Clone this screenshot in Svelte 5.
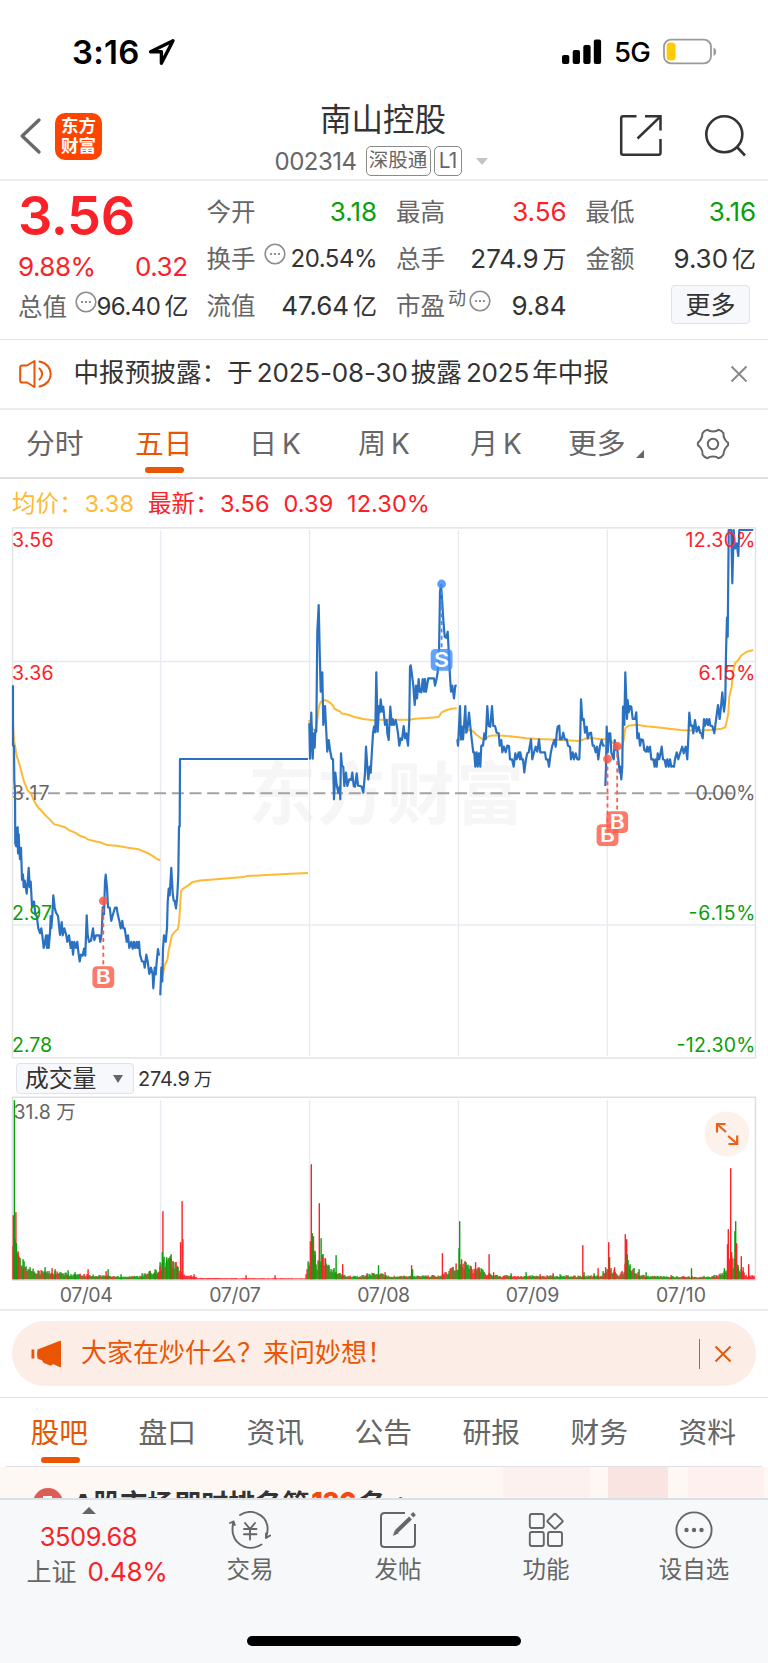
<script>
  const RED = '#fa2228';
  const GREEN = '#0a9f0a';

  // Each trace is digitised on its own grid: origin (x0, y0) and kx / ky units per pixel.
  const trace = (x0, y0, kx, ky, raw) =>
    raw.trim().split(/\s+/).map((p) => {
      const [x, y] = p.split(',').map(Number);
      return `${(x0 + x / kx).toFixed(1)},${(y0 + y / ky).toFixed(1)}`;
    }).join(' ');
  const a = (s) => trace(0, 520, 3, 2.904, s);
  const b = (s) => trace(300, 520, 3, 3, s);
  const c = (s) => trace(520, 520, 3, 3, s);

  const prices = [
    a(`39,480 39,655 42,655 43,755 45,790 46,940 49,948 50,895 53,892 54,968 56,912 58,960 60,985 63,952 66,1045 69,1030 71,1066 74,1047 77,1066 80,1085 83,1050 86,1010 89,1066 92,1050 96,1122 102,1108 106,1145 110,1150 115,1185 120,1200 124,1186 127,1206 131,1243 135,1225 138,1206 141,1243 144,1206 146,1243 150,1200 152,1150 154,1185 157,1150 160,1090 164,1126 168,1140 174,1150 180,1205 185,1168 188,1206 193,1186 199,1206 202,1225 207,1206 212,1243 216,1225 219,1262 223,1225 228,1243 232,1225 236,1262 239,1282 243,1262 248,1265 252,1245 256,1265 260,1148 263,1206 267,1225 273,1222 279,1186 283,1220 288,1206 298,1206 301,1225 305,1200 308,1125 312,1145 315,1050 317,1030 321,1068 324,1125 329,1126 334,1164 339,1145 345,1126 350,1126 353,1145 358,1164 362,1186 367,1164 370,1186 374,1186 380,1225 384,1206 388,1243 394,1225 398,1245 402,1225 406,1243 410,1225 413,1243 417,1225 420,1262 426,1282 431,1282 434,1300 439,1262 443,1282 448,1318 453,1300 458,1320 460,1360 464,1300 467,1320 470,1282 474,1246 477,1265`),
    a(`481,1380 484,1300 487,1340 489,1245 492,1206 497,1225 501,1185 503,1110 506,1070 509,1090 514,1010 518,1085 521,1105 524,1106 528,1128 532,1090 535,1030 537,890 539,890 540,694 924,694`),
    b(`28,610 30,716 34,578 38,716 41,640 44,683 46,630 49,635 52,335 56,255 59,395 62,515 67,457 70,615 75,558 79,635 82,695 86,660 90,690 95,716 99,718 102,838 106,758 110,795 115,818 119,800 121,838 123,700 126,738 130,740 133,798 138,758 142,798 148,778 154,780 157,758 161,798 165,800 170,760 174,797 180,798 185,800 190,818 195,760 198,680 202,740 205,778 209,740 212,758 216,690 219,640 222,620 226,637 229,457 233,635 237,558 239,577 242,538 246,575 250,560 255,615 260,600 262,640 266,660 271,560 275,615 278,597 282,615 287,600 290,615 294,640 298,677 302,655 306,660 311,618 315,655 319,640 324,677 328,600 330,440 332,436 335,457 340,497 344,555 348,497 351,535 356,477 359,515 364,517 368,477 372,515 375,477 378,515 385,475 402,475 405,497 410,475 413,457 417,400 420,215 423,195 426,235 430,300 434,350 439,353 443,335 447,410 450,470 453,515 457,497 462,535 466,497 470,496`),
    b(`472,658 474,677 477,620 480,558 483,658 486,620 489,658 492,620 496,558 499,638 503,620 507,578 511,618 515,658 520,697 523,697 526,740 530,697 533,740 537,700 541,740 544,677 549,677 553,640 557,658 562,558 566,618 571,620 576,558 580,618 585,618 590,638 596,640 599,677 604,660 607,697 612,680 617,697 622,677 627,678 630,718 636,718 641,740 646,700 650,718 656,697 660,718`) + ' ' +
    c(`1,697 5,718 9,718 13,757 18,718 22,700 26,697 33,658 37,718 42,697 47,680 52,695 57,658 61,697 75,697 78,718 83,718 87,740 92,700 97,677 103,660 107,680 110,640 113,620 118,617 120,658 125,658 130,638 134,658 140,658 144,677 150,680 153,718 158,697 162,718 167,700 172,718 178,718 181,640 183,538 187,600 191,597 195,638 200,620 203,655 208,640 213,638 218,677 222,677 227,697 231,680 235,718 240,677 245,660 249,677 254,677`),
    c(`256,798 258,740 260,620 263,697 267,640 271,640 274,697 278,710 281,718 284,660 287,690 291,680 295,718 299,758 301,740 304,778 307,740 309,560 313,615 316,457 321,597 323,540 326,577 330,558 334,560 338,597 345,597 349,577 352,655 356,640 360,677 364,658 369,660 373,690 378,695 382,680 385,695 390,680 394,718 400,718 404,740 407,718 410,740 413,700 418,718 422,697 425,680 429,718 434,720 438,740 442,718 446,740 450,718 454,740 458,738 462,740 465,718 470,697 475,718 480,700 487,680 491,700 497,680 502,718 505,655 508,578 512,617 517,617 520,640 525,600 530,635 536,620 540,638 544,640 548,655 552,597 555,617 560,597 564,615 568,597 571,617 577,618 583,640 588,600 594,555 599,597 603,560 607,517 612,575 616,540 618,400 621,293 623,350 626,30 634,30 637,190 641,30 645,85 650,70 655,108 658,30 700,30`)
  ];

  const averages = [
    a(`39,590 42,640 46,660 50,685 60,715 72,760 83,785 94,797 103,817 114,835 125,845 137,858 150,870 163,884 180,888 195,892 208,901 225,908 240,917 255,922 265,928 285,933 300,936 322,944 350,946 380,951 415,956 430,962 445,968 460,977 472,985 481,988`),
    a(`489,1320 494,1292 502,1278 507,1245 516,1206 524,1196 534,1188 538,1160 543,1078 550,1070 565,1061 578,1051 600,1047 640,1044 730,1037 740,1034 800,1031 870,1027 924,1025`),
    b(`26,600 30,610 40,630 46,630 52,600 56,565 60,550 66,542 74,540 84,544 92,550 100,558 104,567 120,574 124,580 148,585 160,590 190,597 220,601 240,599 330,599 345,596 380,594 416,591 425,577 440,570 455,566 470,565`),
    b(`472,658 480,660 490,640 505,630 517,632 530,645 545,656 555,657 568,648 590,646 620,648 650,651 680,655 720,658`) + ' ' + c(`80,658 120,660 180,663 195,656 215,654 240,658 256,658`),
    c(`262,650 280,670 295,677 305,685 311,660 316,625 325,617 350,614 380,619 430,624 480,630 530,632 580,629 605,626 616,622 621,600 625,580 628,530 635,500 638,460 645,430 655,420 662,408 680,395 700,390`)
  ];

  const columns = [160.6, 309.6, 458.4, 607.3];

  // Background volume level along the axis, as [x, height].
  const level = [[13, 40], [16, 32], [19, 22], [22, 17], [28, 12], [34, 10], [42, 8], [56, 7], [70, 5], [100, 4], [116, 3], [138, 3], [150, 7], [158, 10], [163, 21], [176, 17], [179, 9], [184, 4], [190, 3], [200, 1.2], [305, 0.8], [309, 20], [314, 28], [317, 14], [321, 24], [326, 17], [331, 12], [337, 7], [343, 4], [360, 3], [375, 6], [384, 4.5], [392, 3], [440, 3.5], [450, 9], [458, 15], [466, 17], [472, 10], [480, 11], [490, 5], [500, 3.5], [600, 3.5], [606, 10], [614, 10], [619, 4.5], [624, 9], [627, 25], [631, 14], [636, 7], [646, 3], [700, 2.5], [718, 4], [724, 8], [728, 17], [736, 20], [740, 11], [746, 4.5], [755, 3]];
  const spikes = `14.3,179,g 13.2,64,r 15.8,67,r 16.4,36,g 18,28,r 23,20,g 45,12,g 52,11,r 55,10,g 68,9,g 75,7,g 88,10,r 106,8,r 108,10,g 121,5,g 142,6,g 150,8,g 155,10,g 158,7,r 160,13,r 162.8,68,r 162.2,27,g 166.5,22,g 170,23,r 171,25,g 173,18,r 177,12,g 180.5,37,r 182,78,r 182.8,40,r 191,4,r 194,5,r 246,4,r 275,4,r 310.3,38,r 311.2,115,r 312.2,46,g 313.4,43,r 315,28,g 319.2,76,r 321,41,g 322.5,22,r 325.5,20,g 336,24,g 342.6,15,r 367,6,r 378.4,14,g 385,7,r 411.5,14,r 412.5,10,g 442.3,26,r 459.6,58,g 458.9,31,g 461.5,20,r 465,18,r 471,13,r 475.5,17,r 479,12,r 489,25,r 493.5,7,r 511,6,g 526,7,g 540,5,r 553,6,r 560,5,g 582.7,34,r 584,7,g 598,11,r 594,6,g 605.5,12,r 608.6,37,r 609.5,22,g 614.5,12,r 625.2,45,r 626.6,40,r 627.2,25,g 630,15,g 639,10,g 646,7,g 671,4,r 691.4,11,g 724.3,11,g 727.4,35,r 728.2,50,r 730.6,111,r 731.6,27,r 734.8,48,g 735.6,58,g 736.6,36,r 738,14,g 741.2,23,r 743,12,r 748.6,15,r`
    .split(' ').map((s) => { const [x, h, k] = s.split(','); return { x: +x, h: +h, k }; });

  const levelAt = (x) => {
    let i = 1;
    while (i < level.length - 1 && level[i][0] < x) i++;
    const [x1, h1] = level[i - 1], [x2, h2] = level[i];
    return h1 + ((h2 - h1) * (x - x1)) / (x2 - x1);
  };
  const rand = (n) => { const v = Math.sin(n * 127.1) * 43758.5453; return v - Math.floor(v); };

  const bars = [];
  for (let x = 13; x < 755; x += 1) {
    const calm = x > 198 && x < 308;
    bars.push({
      x,
      h: Math.max(0.6, levelAt(x) * (0.55 + rand(x) * 0.65)),
      k: calm || (x > 179 && x < 200) || x > 741 ? 'r' : rand(x + 0.5) > 0.4 ? 'g' : 'r'
    });
  }
  const volume = [...bars, ...spikes];

  const periods = ['分时', '五日', '日 K', '周 K', '月 K', '更多'];
  const sections = ['股吧', '盘口', '资讯', '公告', '研报', '财务', '资料'];
</script>

{#snippet info()}
  <svg class="info" width="22" height="22" viewBox="0 0 22 22" fill="none" stroke="#8d8d8d" stroke-width="1.6">
    <circle cx="11" cy="11" r="9.8" />
    <path d="M6.1 11h2M10 11h2M13.9 11h2" stroke-width="2" />
  </svg>
{/snippet}

{#snippet cell(label, value, unit = '', tone = '', mark = false, sup = '')}
  <div class="cell">
    <span class="label">{label}</span>
    {#if sup}<span class="sup">{sup}</span>{/if}
    {#if mark}{@render info()}{/if}
    <span class="value {tone}">{value}{#if unit}<em>{unit}</em>{/if}</span>
  </div>
{/snippet}

{#snippet marker(x, y, top, letter, fill)}
  <line x1={x} x2={x} y1={y} y2={top} stroke={fill} stroke-width="1.8" stroke-dasharray="4 3.4" />
  <circle cx={x} cy={y} r="4.4" {fill} opacity=".85" />
  <rect x={x - 10.9} y={top} width="21.8" height="21.8" rx="4.5" {fill} opacity=".82" />
  <text class="letter" {x} y={top + 18} text-anchor="middle" textLength="15" lengthAdjust="spacingAndGlyphs">{letter}</text>
{/snippet}

<div class="page">
  <div class="status">
    <span class="clock">3:16</span>
    <svg class="locate" width="28" height="28" viewBox="0 0 28 28" fill="none" stroke="#000" stroke-width="3.4" stroke-linejoin="round"><path d="M25 2.8 2.6 13.8h10.8v11.4z" /></svg>
    <svg class="signal" width="40" height="26" viewBox="0 0 40 26"><rect x="0" y="16" width="7.3" height="9" rx="2" /><rect x="10.7" y="11" width="7.3" height="14" rx="2" /><rect x="21.3" y="6" width="7.3" height="19" rx="2" /><rect x="31.8" y="0.5" width="7.3" height="24.5" rx="2" /></svg>
    <span class="net">5G</span>
    <svg class="battery" width="54" height="28" viewBox="0 0 54 28"><rect x="1" y="1.7" width="47" height="23.6" rx="7" fill="none" stroke="#9b9b9b" stroke-width="1.8" /><rect x="3.6" y="4.4" width="9" height="18.2" rx="3.6" fill="#fecb05" /><path d="M50.5 9.5c3.6 1.4 3.6 7 0 8.4z" fill="#9b9b9b" /></svg>
  </div>

  <header>
    <svg class="back" width="24" height="40" viewBox="0 0 24 40" fill="none" stroke="#696969" stroke-width="3.4" stroke-linecap="round" stroke-linejoin="round"><path d="M20 4 3.2 20 20 36" /></svg>
    <div class="logo"><span>东方</span><span>财富</span></div>
    <div class="title">
      <h1>南山控股</h1>
      <div class="code"><span class="num">002314</span><span class="tag">深股通</span><span class="tag short">L1</span><i></i></div>
    </div>
    <svg class="share" width="44" height="44" viewBox="0 0 44 44" fill="none" stroke="#333" stroke-width="2.5"><path d="M17.5 2.2H4.2Q2.2 2.2 2.2 4.2V38.8Q2.2 40.8 4.2 40.8H39.5Q41.5 40.8 41.5 38.8V25M26 2.2H41.5V16.5M41 2.8 18.5 24.5" /></svg>
    <svg class="search" width="44" height="44" viewBox="0 0 44 44" fill="none" stroke="#333" stroke-width="2.6"><circle cx="20.3" cy="20.3" r="18" /><path d="m32.5 32.5 8.500 9" /></svg>
  </header>

  <section class="quote">
    <div class="main">
      <div class="last">3.56</div>
      <div class="change"><span>9.88%</span><span>0.32</span></div>
      {@render cell('总值', '96.40', '亿', 'tight', true)}
    </div>
    <div class="col">{@render cell('今开', '3.18', '', 'down')}{@render cell('换手', '20.54%', '', 'tight', true)}{@render cell('流值', '47.64', '亿')}</div>
    <div class="col">{@render cell('最高', '3.56', '', 'up')}{@render cell('总手', '274.9', '万')}{@render cell('市盈', '9.84', '', '', true, '动')}</div>
    <div class="col">{@render cell('最低', '3.16', '', 'down')}{@render cell('金额', '9.30', '亿')}<div class="cell"><button class="more">更多</button></div></div>
  </section>

  <section class="notice">
    <svg width="34" height="30" viewBox="0 0 34 30" fill="none" stroke="#ea5504" stroke-width="2" stroke-linejoin="round" stroke-linecap="round"><path d="M15.5 2v26L8 23.5H3.2Q1.2 23.5 1.2 21.5V8.5Q1.2 6.5 3.2 6.5H8zM20.5 9.5c3.5 3 3.5 8 0 11M20.5 2.5c15 3 15 22 0 25" /></svg>
    <span>中报预披露：于<b>2025-08-30</b>披露<b>2025</b>年中报</span>
    <svg class="close" width="18" height="18" viewBox="0 0 18 18" fill="none" stroke="#8a8a8a" stroke-width="2"><path d="m1.5 1.5 15 15M16.5 1.5l-15 15" /></svg>
  </section>

  <nav class="periods">
    {#each periods as name, i}
      <span class:active={i === 1} class="p{i}">{name}</span>
    {/each}
    <svg class="gear" width="34" height="32" viewBox="0 0 34 32" fill="none" stroke="#666" stroke-width="2" stroke-linejoin="round"><path d="M11.5 1.8Q13.2 3.5 17 3.5T22.5 1.8Q26 2.6 27.5 5.2Q27 8.5 29 11.5T32 14.5Q32.4 16 32 17.5Q30.5 18.5 29 21T27.5 26.5Q26 29.2 22.5 30.2Q20.8 28.5 17 28.5T11.5 30.2Q8 29.2 6.5 26.5Q7 23.5 5 20.5T2 17.5Q1.6 16 2 14.5Q3.5 13.5 5 11T6.5 5.2Q8 2.6 11.5 1.8Z" /><circle cx="17" cy="16" r="5.2" /></svg>
  </nav>

  <div class="legend"><span class="avg n0">均价：</span><span class="avg n1">3.38</span><span class="n2">最新：</span><span class="n3">3.56</span><span class="n4">0.39</span><span>12.30%</span></div>

  <svg class="chart" width="768" height="533" viewBox="0 527 768 533">
    <text class="watermark" x="248" y="819" textLength="276">东方财富</text>
    <g fill="none" stroke="#e8ecf2" stroke-width="1.4">
      {#each columns as x}<path d="M{x} 530V1056" />{/each}
      <path d="M12.5 661.5H755.5M12.5 925H755.5" />
      <rect x="12.5" y="527.9" width="743" height="530" stroke="#e0e2e6" />
    </g>
    <path d="M12.5 793.3H739" stroke="#a3a3a3" stroke-width="1.9" stroke-dasharray="12 5.7" />
    <g fill="none" stroke-linejoin="round">
      {#each averages as points}<polyline {points} stroke="#feb936" stroke-width="2" />{/each}
      {#each prices as points}<polyline {points} stroke="#2b71c1" stroke-width="2.2" />{/each}
    </g>
    <g class="axis">
      <text x="12" y="547" fill={RED} textLength="41.5">3.56</text>
      <text x="12" y="680" fill={RED} textLength="41.5">3.36</text>
      <text x="12" y="800" fill="#666" textLength="37.5">3.17</text>
      <text x="12" y="919.5" fill={GREEN} textLength="40">2.97</text>
      <text x="12" y="1052" fill={GREEN} textLength="40">2.78</text>
      <g text-anchor="end">
        <text x="755.5" y="547" fill={RED} textLength="70">12.30%</text>
        <text x="755.5" y="680" fill={RED} textLength="57">6.15%</text>
        <text x="755.5" y="800" fill="#666" textLength="60">0.00%</text>
        <text x="755.5" y="919.5" fill={GREEN} textLength="67">-6.15%</text>
        <text x="755.5" y="1052" fill={GREEN} textLength="79">-12.30%</text>
      </g>
    </g>
    {@render marker(103.3, 901, 966.2, 'B', '#fc5b49')}
    {@render marker(607.5, 759, 824.2, 'B', '#fc5b49')}
    {@render marker(617.2, 746.2, 811.3, 'B', '#fc5b49')}
    {@render marker(441.6, 584, 649, 'S', '#3f8dfb')}
  </svg>

  <div class="indicator"><button>成交量<i></i></button><span>274.9<em>万</em></span></div>

  <svg class="chart" width="768" height="213" viewBox="0 1096 768 213">
    <g fill="none" stroke="#e8ecf2" stroke-width="1.4">
      {#each columns as x}<path d="M{x} 1100V1279" />{/each}
      <rect x="12.5" y="1097.3" width="743" height="182.7" stroke="#dcdee2" stroke-width="1.5" />
    </g>
    <text class="peak" x="13.5" y="1119">31.8 万</text>
    {#each volume as v}<rect x={v.x - 0.6} y={1279.2 - v.h} width="1.4" height={v.h} fill={v.k === 'g' ? GREEN : RED} />{/each}
    <g class="dates" text-anchor="middle">
      <text x="86.3" y="1302" textLength="53">07/04</text><text x="235" y="1302" textLength="51.5">07/07</text><text x="383.7" y="1302" textLength="53">07/08</text><text x="532.5" y="1302" textLength="53.5">07/09</text><text x="681" y="1302" textLength="50">07/10</text>
    </g>
    <circle cx="727" cy="1134" r="22.6" fill="#fdf1eb" />
    <path d="M717 1132.5v-8.5h8.5M717.5 1124.5l8.5 7.5M737.2 1135.5v8.5h-8.7M736.7 1143.5l-8.5-7.5" fill="none" stroke="#ec5f14" stroke-width="2.2" />
  </svg>

  <section class="promo">
    <div class="pill">
      <svg width="32" height="28" viewBox="0 0 32 28" fill="#ea5504"><rect x="0.5" y="9.5" width="2.8" height="9" /><path d="M6.500 9.500 29 .8q1-.4 1 .6V26.600q0 1-1 .6L22 24q-1 2-3.5 1.2L13 23q-1.500-.7-1.700-2.500L6.500 18.500Q5.500 14 6.500 9.500z" /></svg>
      <span>大家在炒什么？来问妙想！</span>
      <i></i>
      <svg class="close" width="18" height="18" viewBox="0 0 18 18" fill="none" stroke="#ea5504" stroke-width="1.9"><path d="m1.5 1.5 15 15M16.5 1.5l-15 15" /></svg>
    </div>
  </section>

  <nav class="sections">
    {#each sections as name, i}<span class:active={i === 0}>{name}</span>{/each}
  </nav>

  <section class="rank">
    <div class="block b1"></div><div class="block b2"></div><div class="block b3"></div>
    <div class="badge"><i></i></div>
    <p>A股市场即时排名第<b>136</b>名<small>›</small></p>
  </section>

  <footer>
    <div class="bar">
      <div class="index"><i></i><strong>3509.68</strong><span>上证<em>0.48%</em></span></div>
      <div class="item">
        <svg width="42" height="38" viewBox="0 0 42 38" fill="none" stroke="#666" stroke-width="1.9" stroke-linecap="round" stroke-linejoin="round"><path d="M11 4C22-3 36 3 38.3 14.5Q39.3 20 37 27M37 27l4.2-2.5M37 27V22.5M32.5 33.5C21 41 7 35 4 23Q2.8 17 4.500 10.500L1 12M4.500 10.500 5.800 14M16 12l5 6 5-6M21 18v10.500M15 18h12.500M15 23.200h12.500" /></svg>
        <span>交易</span>
      </div>
      <div class="item">
        <svg width="38" height="38" viewBox="0 0 38 38" fill="none" stroke="#666" stroke-width="2" stroke-linejoin="round"><path d="M26 2H5.5Q2 2 2 5.5V32.5Q2 36 5.5 36H32.5Q36 36 36 32.5V13" /><path d="M35.5 2.5 33 5M31.5 7 17.5 20.5" stroke-width="4" /><path d="m16 19-2.2 6 6-2.7z" fill="#666" stroke="none" /></svg>
        <span>发帖</span>
      </div>
      <div class="item">
        <svg width="38" height="38" viewBox="0 0 38 38" fill="none" stroke="#666" stroke-width="1.9" stroke-linejoin="round"><rect x="2.8" y="3" width="14" height="14" rx="2" /><rect x="2.8" y="21" width="14" height="14" rx="2" /><rect x="21" y="21" width="14" height="14" rx="2" /><path d="M27.2 3 Q28 2.2 28.8 3L35.3 9.4Q36 10.2 35.3 11L28.8 17.3Q28 18 27.2 17.3L20.8 11Q20 10.2 20.8 9.4Z" /></svg>
        <span>功能</span>
      </div>
      <div class="item">
        <svg width="38" height="38" viewBox="0 0 38 38" fill="none" stroke="#666" stroke-width="1.9"><circle cx="19" cy="19" r="17.6" /><g fill="#666" stroke="none"><circle cx="11.5" cy="19" r="2.2" /><circle cx="19" cy="19" r="2.2" /><circle cx="26.5" cy="19" r="2.2" /></g></svg>
        <span>设自选</span>
      </div>
    </div>
    <div class="home"></div>
  </footer>
</div>

<style>
  :global(body) { margin: 0; background: #fff; }
  .page, .page :global(*) { box-sizing: border-box; }
  .page { width: 768px; height: 1663px; overflow: hidden; background: #fff; color: #333; font-family: Inter, "Noto Sans CJK SC", sans-serif; display: flex; flex-direction: column; }
  .page > * { flex: none; }
  svg { display: block; flex: none; }
  button { font: inherit; color: inherit; margin: 0; padding: 0; white-space: nowrap; }
  em, i { font-style: normal; }

  .status { height: 96px; padding: 7px 51px 0 72px; display: flex; align-items: center; color: #000; }
  .clock { width: 76px; font-size: 33px; font-weight: 600; letter-spacing: 0.3px; }
  .signal { margin-left: auto; margin-right: 12px; }
  .net { width: 38px; margin-right: 11px; font-size: 27.5px; font-weight: 500; letter-spacing: -0.7px; }

  header { height: 85px; border-bottom: 2px solid #ececef; padding: 0 20px 3px 19px; display: flex; align-items: center; position: relative; }
  .back { margin-right: 12px; }
  .logo { width: 47px; height: 47px; border-radius: 10px; background: #ff4400; color: #fff; font-size: 17.5px; line-height: 19.5px; font-weight: 700; display: flex; flex-direction: column; align-items: center; justify-content: center; padding-bottom: 1px; }
  .title { position: absolute; left: 0; right: 2px; top: 0; display: flex; flex-direction: column; align-items: center; pointer-events: none; }
  h1 { margin: 6px 0 0; font-size: 31.5px; line-height: 35px; font-weight: 400; }
  .code { margin-top: 8px; height: 32px; width: 213px; margin-right: 4px; display: flex; align-items: center; color: #666; }
  .code .num { width: 91px; font-size: 24px; letter-spacing: -0.5px; }
  .tag { height: 30px; width: 65px; border: 1.5px solid #8a8a8a; border-radius: 5px; font-size: 19.5px; line-height: 27px; text-align: center; white-space: nowrap; }
  .tag.short { width: 28px; margin-left: 3px; font-size: 21px; letter-spacing: -1px; }
  .code i { margin-left: 14px; border: 6.5px solid transparent; border-top: 7px solid #c4c4c4; border-bottom: 0; }
  .share { margin-left: auto; margin-right: 41px; }

  .quote { height: 159px; border-bottom: 1.5px solid #e6e6e8; padding: 1px 12px 0 18px; display: grid; grid-template-columns: repeat(4, 169.5px); column-gap: 20px; font-size: 24.5px; }
  .main { display: flex; flex-direction: column; }
  .last { height: 66px; line-height: 67px; font-size: 54px; font-weight: 600; color: #fa2228; letter-spacing: -0.4px; }
  .change { height: 36px; display: flex; align-items: center; justify-content: space-between; color: #fa2228; font-size: 26px; letter-spacing: -0.5px; }
  .main .cell { height: 45px; }
  .col { padding-top: 6px; }
  .col .label { margin-left: -1px; }
  .cell { height: 47.4px; display: flex; align-items: center; white-space: nowrap; line-height: 30px; }
  .label { color: #666; font-size: 24.5px; }
  .sup { color: #666; font-size: 18px; position: relative; top: -7px; margin-left: 3px; margin-right: -5px; }
  .info { margin: 0 -3px 10px 8px; }
  .value { margin-left: auto; font-size: 26px; letter-spacing: -0.05px; }
  .value em { margin-left: 4px; font-size: 24px; letter-spacing: 0; }
  .value.tight { font-size: 24px; letter-spacing: -0.5px; }
  .main .value { margin-right: -1px; }
  .up { color: #fa2228; }
  .down { color: #0a9f0a; }
  .more { width: 79px; height: 39px; margin: 0 6px 3px auto; border: 1.5px solid #dfe2e8; border-radius: 4px; background: #f6f8fb; font-size: 25px; line-height: 34px; }

  .notice { height: 70px; border-bottom: 2px solid #ececef; padding: 0 20px 0 19px; display: flex; align-items: center; font-size: 25.6px; white-space: nowrap; }
  .notice span { margin-left: 20.5px; line-height: 36px; position: relative; top: -1px; }
  .notice b { font-weight: 400; letter-spacing: -0.15px; margin: 0 3px 0 4px; font-size: 26px; }
  .close { margin-left: auto; }

  .periods { height: 69px; border-bottom: 2px solid #dddfe5; display: flex; align-items: center; font-size: 28.8px; color: #666; padding: 0 38px 0 26px; white-space: nowrap; }
  .periods span { position: relative; height: 100%; line-height: 68px; }
  .p0 { width: 109px; } .p1 { width: 114px; } .p2 { width: 109px; } .p3 { width: 112px; } .p4 { width: 98px; } .p5 { width: 78px; }
  .periods .p2, .periods .p3, .periods .p4 { font-size: 28px; word-spacing: -3px; }
  .active { color: #ea5504; }
  .p1.active::after { content: ''; position: absolute; left: 10px; top: 57px; width: 39px; height: 6px; border-radius: 3px; background: #ea5504; }
  .p5::after { content: ''; position: absolute; left: 68px; top: 40px; border-left: 8px solid transparent; border-bottom: 8px solid #666; }
  .gear { margin-left: auto; }

  .legend { height: 48px; padding: 1px 0 0 12px; display: flex; align-items: center; color: #fa2228; font-size: 23.5px; white-space: nowrap; line-height: 30px; letter-spacing: 0.1px; }
  .legend .avg { color: #feb936; }
  .n0 { width: 72.5px; } .n1 { width: 63.5px; } .n2 { width: 72px; } .n3 { width: 63.5px; } .n4 { width: 63.5px; }

  .axis, .dates, .peak { font-size: 19.5px; }
  .dates, .peak { fill: #666; }
  .watermark { font-size: 68px; font-weight: 700; fill: #f6f6f6; }
  .letter { font-size: 19.5px; font-weight: 600; fill: #fff; }

  .indicator { height: 36px; padding: 1px 0 0 16px; display: flex; align-items: center; font-size: 20px; letter-spacing: -0.2px; }
  .indicator button { width: 118px; height: 31px; border: 1.5px solid #dfe2e8; border-radius: 4px; background: #f6f8fb; font-size: 23.8px; line-height: 26px; letter-spacing: 0; padding-left: 8px; display: flex; align-items: center; }
  .indicator i { margin-left: 17px; border: 5px solid transparent; border-top: 8px solid #666; border-bottom: 0; }
  .indicator span { margin-left: 4px; line-height: 26px; }
  .indicator em { margin-left: 4px; font-size: 18.5px; }

  .promo { height: 89px; border-top: 2px solid #ececef; border-bottom: 1.5px solid #dfe2e8; padding: 10px 12px; }
  .pill { height: 65px; border-radius: 33px; background: #fceee7; color: #ea5504; display: flex; align-items: center; padding: 0 24px 0 19px; font-size: 26px; }
  .pill span { margin-left: 18px; white-space: nowrap; line-height: 36px; position: relative; top: -1px; }
  .pill i { margin-left: auto; width: 1.5px; height: 30px; background: #ea5504; }
  .pill .close { margin-left: 14px; }

  .sections { height: 69px; margin: 0 6px; border-bottom: 1.5px solid #e0e1e6; padding: 0 24.5px; display: flex; font-size: 28.8px; line-height: 70px; color: #666; }
  .sections span { width: 108px; flex: none; position: relative; }
  .sections .active { color: #ea5504; }
  .sections .active::after { content: ''; position: absolute; left: 10px; top: 59px; width: 39px; height: 6px; border-radius: 3px; background: #ea5504; }

  .rank { height: 31px; overflow: hidden; position: relative; background: #fef8f5; display: flex; padding: 21px 0 0 33px; }
  .block { position: absolute; top: 0; height: 31px; }
  .b1 { left: 503px; width: 87px; background: #fdf1f0; }
  .b2 { left: 608px; width: 60px; background: #fae4e2; }
  .b3 { left: 688px; width: 76px; background: #fdf0ee; }
  .badge { width: 30px; height: 30px; flex: none; border-radius: 50%; background: #dc5c56; padding: 8px 0 0 10px; }
  .badge i { display: block; width: 9px; height: 9px; background: #fff; }
  .rank p { margin: 0 0 0 10px; font-size: 27px; line-height: 34px; font-weight: 700; white-space: nowrap; }
  .rank b { color: #f4480f; font-size: 25px; margin: 0 3px 0 2px; position: relative; top: -4px; }
  .rank small { color: #666; font-size: 24px; font-weight: 400; margin-left: 12px; position: relative; top: -4px; }

  footer { height: 165px; border-top: 2px solid #dcdfe6; background: #f6f8fa; }
  .bar { display: flex; height: 136px; padding-left: 1px; color: #666; }
  .index { width: 175px; display: flex; flex-direction: column; align-items: center; white-space: nowrap; }
  .index i { margin-top: 7px; border: 7px solid transparent; border-bottom: 7px solid #666; border-top: 0; }
  .index strong { margin-top: 8px; font-size: 25.5px; line-height: 30px; font-weight: 400; color: #fa2228; letter-spacing: -0.5px; }
  .index span { margin-top: 5px; margin-left: 17px; font-size: 25px; line-height: 30px; }
  .index em { margin-left: 11px; color: #fa2228; font-size: 26px; letter-spacing: -0.3px; }
  .item { width: 148px; display: flex; flex-direction: column; align-items: center; font-size: 23.5px; line-height: 30px; padding-top: 11px; }
  .item span { margin-top: 6px; }
  .home { width: 274px; height: 10px; border-radius: 5px; background: #000; margin: 0 auto; }
</style>
